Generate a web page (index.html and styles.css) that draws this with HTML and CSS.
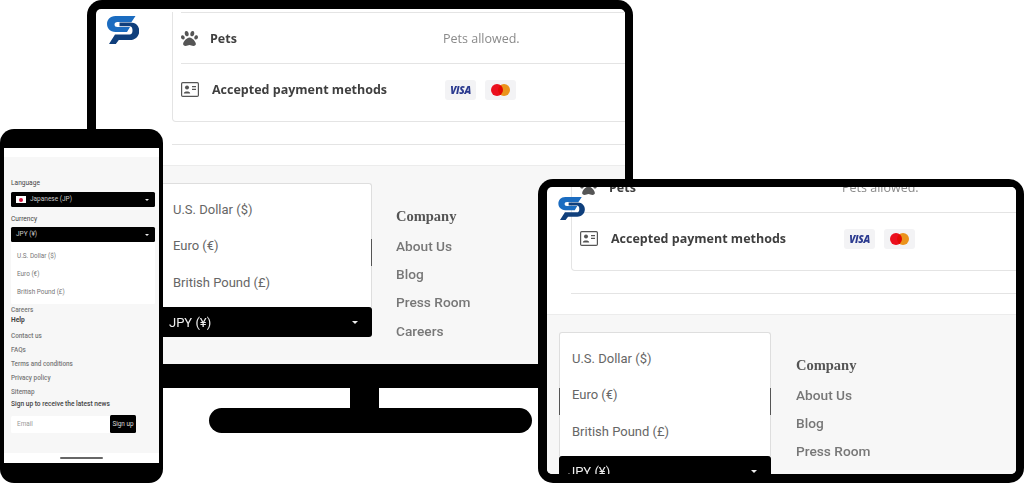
FILE: index.html
```html
<!DOCTYPE html>
<html lang="en">
<head>
<meta charset="utf-8">
<title>Responsive preview</title>
<link rel="stylesheet" href="styles.css">
</head>
<body>
<svg class="defs" width="0" height="0" aria-hidden="true">
  <defs>
    <symbol id="logo" viewBox="0 0 32 28">
      <path d="M28.5 0 L24.5 6 H10.5 Q7.5 6 7.5 8.5 Q7.5 11 10.5 11 H23 L20 16 H8.5 C-2.8 16 -2.8 0 8.5 0 Z" fill="#1b6cc0"/>
      <path d="M12.5 6.6 H23.5 C35.5 6.6 35 24 23 24 H11.8 L8.8 28 H2 L8 18.6 H22.5 Q25.5 18.6 25.5 14.5 Q25.5 10.2 22.5 10.2 H12.5 Z" fill="#0f3f7c"/>
    </symbol>
    <symbol id="paw" viewBox="0 0 512 512">
      <path d="M256 224c-79.41 0-192 122.76-192 200.25 0 34.9 26.81 55.75 71.74 55.75 48.84 0 81.09-25.08 120.26-25.08 39.51 0 71.85 25.08 120.26 25.08 44.93 0 71.74-20.85 71.74-55.75C448 346.76 335.41 224 256 224zm-147.28-12.61c-10.4-34.65-42.44-57.09-71.56-50.13-29.12 6.96-44.29 40.69-33.89 75.34 10.4 34.65 42.44 57.09 71.56 50.13 29.12-6.96 44.29-40.69 33.89-75.34zm84.72-20.78c30.94-8.14 46.42-49.94 34.58-93.36s-46.52-72.01-77.46-63.87-46.42 49.94-34.58 93.36c11.84 43.42 46.52 72.01 77.46 63.87zm281.39-29.34c-29.12-6.96-61.15 15.48-71.56 50.13-10.4 34.65 4.77 68.38 33.89 75.34 29.12 6.96 61.15-15.48 71.56-50.13 10.4-34.65-4.77-68.38-33.89-75.34zm-156.27 29.34c30.94 8.14 65.62-20.45 77.46-63.87 11.84-43.42-3.64-85.21-34.58-93.36s-65.62 20.45-77.46 63.87c-11.84 43.42 3.64 85.22 34.58 93.36z" fill="#555"/>
    </symbol>
    <symbol id="idcard" viewBox="0 0 18 15">
      <rect x="0.6" y="0.6" width="16.8" height="13.8" rx="1.2" fill="none" stroke="#555" stroke-width="1.2"/>
      <circle cx="6" cy="5.4" r="2" fill="#555"/>
      <path d="M2.8 11.4 C2.8 8.8 9.2 8.8 9.2 11.4 Z" fill="#555"/>
      <path d="M11 4.6 H15 M11 7.4 H15" stroke="#555" stroke-width="1.1"/>
    </symbol>
  </defs>
</svg>

<main class="canvas">
  <section class="device monitor">
    <div class="screen">
      <svg class="logo"><use href="#logo"/></svg>
      <div class="site site-monitor">
        <div class="card">
          <div class="row">
            <svg class="paw"><use href="#paw"/></svg>
            <span class="row-title">Pets</span>
            <span class="row-value">Pets allowed.</span>
          </div>
          <div class="row">
            <svg class="idcard"><use href="#idcard"/></svg>
            <span class="row-title">Accepted payment methods</span>
            <span class="pay"><span class="badge visa">VISA</span><span class="badge mc"><i class="dot dot-red"></i><i class="dot dot-orange"></i></span></span>
          </div>
        </div>
        <hr class="rule">
        <footer class="foot">
          <div class="picker">
            <ul class="menu">
              <li>U.S. Dollar ($)</li>
              <li>Euro (€)</li>
              <li>British Pound (£)</li>
            </ul>
            <div class="bar"><span>JPY (¥)</span><i class="caret"></i></div>
          </div>
          <nav class="links">
            <h4>Company</h4>
            <a>About Us</a>
            <a>Blog</a>
            <a>Press Room</a>
            <a>Careers</a>
          </nav>
        </footer>
      </div>
    </div>
  </section>
  <div class="neck"></div>
  <div class="base"></div>

  <section class="device tablet">
    <div class="screen">
      <svg class="logo"><use href="#logo"/></svg>
      <div class="site site-tablet">
        <div class="card">
          <div class="row">
            <svg class="paw"><use href="#paw"/></svg>
            <span class="row-title">Pets</span>
            <span class="row-value">Pets allowed.</span>
          </div>
          <div class="row">
            <svg class="idcard"><use href="#idcard"/></svg>
            <span class="row-title">Accepted payment methods</span>
            <span class="pay"><span class="badge visa">VISA</span><span class="badge mc"><i class="dot dot-red"></i><i class="dot dot-orange"></i></span></span>
          </div>
        </div>
        <hr class="rule">
        <footer class="foot">
          <div class="picker">
            <ul class="menu">
              <li>U.S. Dollar ($)</li>
              <li>Euro (€)</li>
              <li>British Pound (£)</li>
            </ul>
            <div class="bar"><span>JPY (¥)</span><i class="caret"></i></div>
          </div>
          <nav class="links">
            <h4>Company</h4>
            <a>About Us</a>
            <a>Blog</a>
            <a>Press Room</a>
            <a>Careers</a>
          </nav>
        </footer>
      </div>
    </div>
  </section>

  <section class="device phone">
    <div class="phone-screen">
      <div class="phone-body">
        <p class="p-label">Language</p>
        <div class="p-select"><span class="flag"><i></i></span><span>Japanese (JP)</span><i class="caret caret-sm"></i></div>
        <p class="p-label p-label-gap">Currency</p>
        <div class="p-select"><span>JPY (¥)</span><i class="caret caret-sm"></i></div>
        <ul class="p-menu">
          <li>U.S. Dollar ($)</li>
          <li>Euro (€)</li>
          <li>British Pound (£)</li>
        </ul>
        <p class="p-link">Careers</p>
        <p class="p-head">Help</p>
        <div class="p-links">
          <a>Contact us</a>
          <a>FAQs</a>
          <a>Terms and conditions</a>
          <a>Privacy policy</a>
          <a>Sitemap</a>
        </div>
        <p class="p-head p-head-news">Sign up to receive the latest news</p>
        <form class="p-form">
          <span class="p-input">Email</span>
          <span class="p-button">Sign up</span>
        </form>
      </div>
      <div class="home-bar"></div>
    </div>
  </section>
</main>
</body>
</html>
```
FILE: styles.css
```css
* { box-sizing: border-box; }
html, body { margin: 0; padding: 0; background: #fff; }
.defs { position: absolute; }
p, ul, h4 { margin: 0; padding: 0; }
ul { list-style: none; }
i { display: block; }

.canvas {
  position: relative;
  width: 1024px;
  height: 483px;
  overflow: hidden;
  background: #fff;
  font-family: "Roboto", "Liberation Sans", sans-serif;
  filter: blur(0.35px);
}

/* Devices on the free canvas */
.device { position: absolute; background: #000; }
.monitor {
  left: 87px; top: 0; width: 546px; height: 388px;
  padding: 9px 8px 24px 9px;
  border-radius: 15px 15px 0 0;
}
.neck { position: absolute; left: 350px; top: 388px; width: 29px; height: 22px; background: #000; }
.base { position: absolute; left: 209px; top: 408px; width: 323px; height: 25px; background: #000; border-radius: 13px; }
.tablet {
  left: 538px; top: 179px; width: 486px; height: 304px;
  padding: 8px 8px 9px 9px;
  border-radius: 15px;
}
.phone {
  left: 0; top: 129px; width: 163px; height: 354px;
  padding: 19px 4px 20px 4px;
  border-radius: 14px;
}

.screen {
  position: relative;
  height: 100%;
  background: #fff;
  border-radius: 5px;
  overflow: hidden;
}
.logo { position: absolute; width: 32px; height: 28px; left: 11px; top: 7px; z-index: 2; }
.tablet .logo { width: 27px; height: 23px; left: 11px; top: 10px; }

/* Shared site content */
.site-monitor { --card-left: 76px; --foot-left: 64px; --start: 3px; }
.site-tablet { --card-left: 24px; --foot-left: 12px; --start: -26px; }
.site { margin-top: var(--start); }
.card {
  margin-left: var(--card-left);
  margin-right: -10px;
  height: 110px;
  background: #fff;
  border: 1px solid #e4e4e4;
  border-top: 0;
  border-radius: 0 0 4px 4px;
  padding-left: 8px;
}
.row {
  display: flex;
  align-items: center;
  height: 51px;
  padding-top: 1px;
  border-top: 1px solid #e4e4e4;
  color: #3f3f3f;
}
.paw { width: 17px; height: 17px; flex: none; margin-right: 12px; }
.idcard { width: 18px; height: 15px; flex: none; margin-right: 13px; }
.row-title {
  font: 700 12.5px/18px "Open Sans", "Liberation Sans", sans-serif;
  width: 233px;
  flex: none;
}
.row-value {
  font: 400 12.5px/18px "Open Sans", "Liberation Sans", sans-serif;
  color: #8a8a8a;
}
.pay { display: flex; gap: 9px; }
.badge {
  display: flex;
  align-items: center;
  justify-content: center;
  width: 31px;
  height: 20px;
  border-radius: 3px;
  background: #f3f3f5;
}
.visa { font: italic 800 10px/20px "Open Sans", "Liberation Sans", sans-serif; color: #2b3a8f; letter-spacing: -0.3px; }
.dot { width: 12px; height: 12px; border-radius: 50%; }
.dot-red { background: #eb0f1e; }
.dot-orange { background: #f79a1c; margin-left: -5px; mix-blend-mode: multiply; }

.rule { border: 0; border-top: 1px solid #e4e4e4; margin: 22px -10px 20px var(--card-left); }

.foot {
  display: flex;
  align-items: flex-start;
  padding: 17px 0 30px var(--foot-left);
  background: #f7f7f7;
  border-top: 1px solid #ececec;
  min-height: 220px;
}
.picker { width: 212px; flex: none; }
.menu {
  position: relative;
  height: 124px;
  padding-top: 7.5px;
  background: #fff;
  border: 1px solid #dedede;
  border-bottom: 0;
  border-radius: 3px 3px 0 0;
  font: 400 13px/36.7px "Roboto", "Open Sans", sans-serif;
  color: #666;
}
.menu::before {
  content: "";
  position: absolute;
  left: -1px; right: -1px; top: 55px; height: 27px;
  border-left: 1px solid #555;
  border-right: 1px solid #555;
}
.menu li { padding-left: 12px; }
.bar {
  display: flex;
  align-items: center;
  justify-content: space-between;
  height: 30px;
  padding: 1px 14px 0 9px;
  background: #000;
  color: #eee;
  border-radius: 3px;
  font: 400 13px/30px "Roboto", "Open Sans", sans-serif;
}
.caret {
  width: 0; height: 0;
  border-left: 3px solid transparent;
  border-right: 3px solid transparent;
  border-top: 3px solid #eee;
}
.caret-sm { border-left-width: 2px; border-right-width: 2px; border-top-width: 2px; margin-left: auto; }
.links { margin-left: 24px; padding-top: 23px; display: flex; flex-direction: column; }
.links h4 {
  font: 700 14.5px/20px "Liberation Serif", serif;
  color: #555;
  margin-bottom: 5.6px;
}
.links a { font: 500 13.7px/28.4px "Roboto", sans-serif; color: #777; }
.site-tablet .links { margin-left: 25px; }

/* Phone */
.phone-screen { height: 100%; background: #fff; padding: 9px 0 0; }
.phone-body {
  height: 296px;
  background: #f7f7f7;
  padding: 21px 4px 0 7px;
  font-size: 6.5px;
  color: #666;
}
.p-label { font: 400 6.6px/10px "Roboto", sans-serif; color: #444; margin-bottom: 4px; }
.p-label-gap { margin-top: 6px; padding-top: 1px; margin-bottom: 3px; }
.p-select {
  display: flex;
  align-items: center;
  height: 15px;
  padding: 0 6px 0 5px;
  background: #000;
  color: #ccc;
  border-radius: 1.5px;
  font: 400 6.5px/15px "Roboto", sans-serif;
}
.flag { width: 10px; height: 7px; background: #fff; margin-right: 4px; display: flex; align-items: center; justify-content: center; }
.flag i { width: 4px; height: 4px; border-radius: 50%; background: #d0103a; }
.p-menu { height: 62px; padding: 5px 0 0 6px; background: #fff; border-radius: 0 0 1.5px 1.5px; font: 400 6.4px/18px "Roboto", sans-serif; color: #777; }
.p-link { font: 500 6.4px/10px "Roboto", sans-serif; color: #777; padding-top: 1px; height: 11px; }
.p-head { font: 700 6.6px/10px "Roboto", sans-serif; color: #444; }
.p-links { display: flex; flex-direction: column; padding-top: 4px; }
.p-links a { font: 500 6.4px/14px "Roboto", sans-serif; color: #777; }
.p-head-news { font-weight: 500; }
.p-form { display: flex; align-items: stretch; margin-top: 6px; height: 18px; }
.p-input { width: 99px; margin-top: 1px; padding-left: 6px; background: #fff; color: #999; font: 400 6.4px/16px "Roboto", sans-serif; border-radius: 1.5px 0 0 1.5px; }
.p-button { width: 26px; background: #000; color: #ddd; text-align: center; font: 400 6.4px/18px "Roboto", sans-serif; border-radius: 1.5px; }
.home-bar { width: 43px; height: 2px; margin: 4px auto 0; background: #666; border-radius: 1px; }
```
